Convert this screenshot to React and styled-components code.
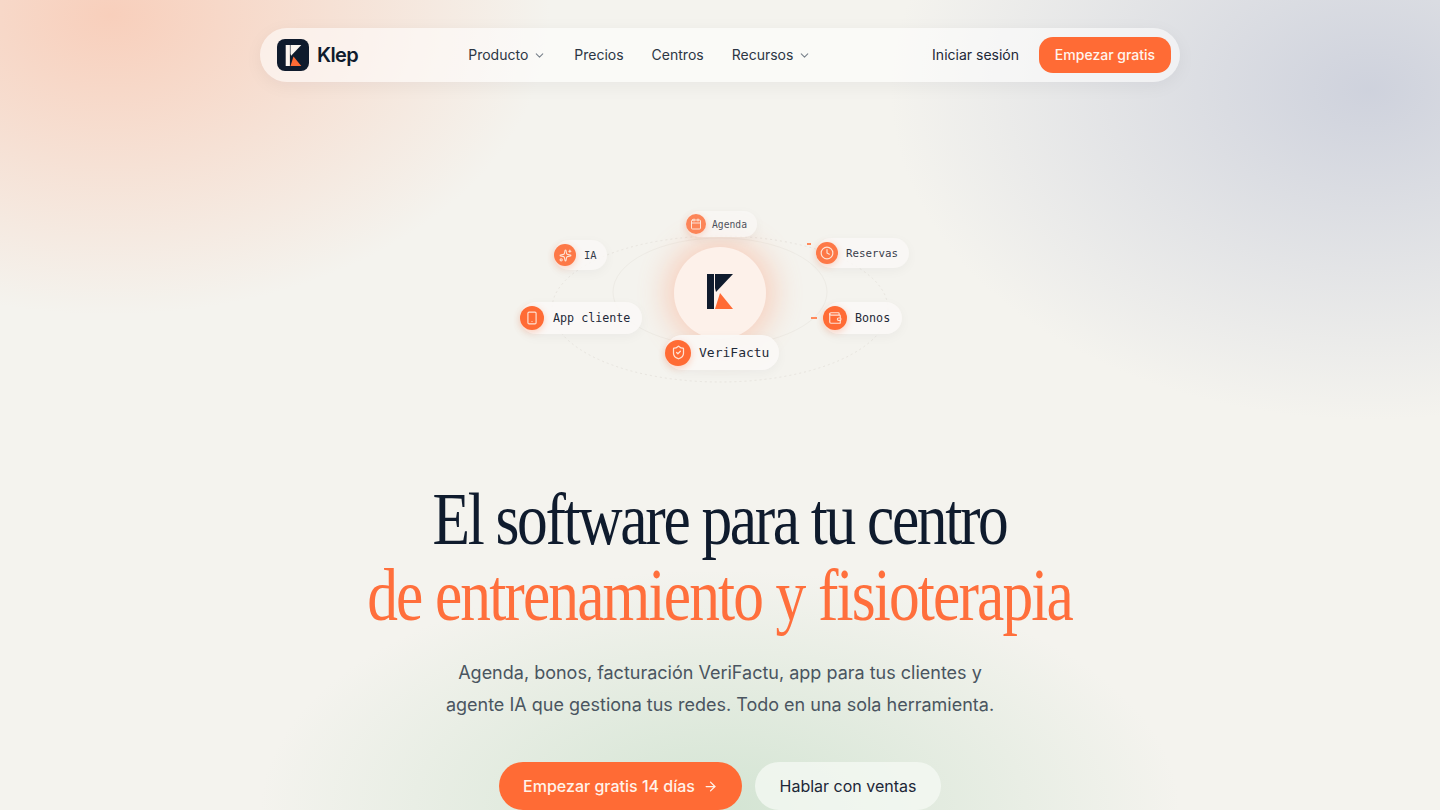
import React from "react";
import styled, { createGlobalStyle } from "styled-components";
import {
  ArrowRight,
  Calendar,
  ChevronDown,
  Clock,
  ShieldCheck,
  Smartphone,
  Sparkles,
  Wallet,
} from "lucide-react";

const GlobalStyle = createGlobalStyle`
  html, body {
    margin: 0;
    height: 100%;
    overflow: hidden;
    background: #f4f3ee;
    font-family: "Inter", "Liberation Sans", sans-serif;
    color: #0f1b2d;
  }
`;

const Page = styled.div`
  width: 1440px;
  height: 810px;
  overflow: hidden;
  display: flex;
  flex-direction: column;
  align-items: center;
  background:
    radial-gradient(ellipse 440px 300px at 110px 15px, rgba(249, 198, 175, 0.8), rgba(249, 198, 175, 0) 100%),
    radial-gradient(ellipse 480px 330px at 1370px 90px, rgba(194, 199, 215, 0.75), rgba(194, 199, 215, 0) 100%),
    radial-gradient(ellipse 460px 240px at 720px 810px, rgba(204, 225, 205, 0.82), rgba(204, 225, 205, 0) 100%),
    #f4f3ee;
`;

const Nav = styled.nav`
  box-sizing: border-box;
  width: 920px;
  height: 54px;
  margin-top: 28px;
  padding: 0 9px 0 17px;
  display: flex;
  align-items: center;
  border-radius: 27px;
  background: rgba(255, 255, 255, 0.55);
  box-shadow: 0 4px 18px rgba(15, 27, 45, 0.05);
`;

const Brand = styled.div`
  display: flex;
  align-items: center;
  gap: 8px;
  font-size: 20px;
  font-weight: 600;
  letter-spacing: -0.03em;
`;

const LogoTile = styled.div`
  width: 32px;
  height: 32px;
  border-radius: 8px;
  background: #0f1b2d;
  display: flex;
  align-items: center;
  justify-content: center;
`;

const NavLinks = styled.div`
  display: flex;
  align-items: center;
  gap: 28px;
  margin-left: 110px;
`;

const NavLink = styled.a`
  display: flex;
  align-items: center;
  gap: 5px;
  font-size: 14px;
  line-height: 20px;
  color: #2c3644;

  svg {
    color: #7a828c;
  }
`;

const NavActions = styled.div`
  margin-left: auto;
  display: flex;
  align-items: center;
  gap: 20px;
`;

const Login = styled.a`
  font-size: 14px;
  line-height: 20px;
  padding-bottom: 1px;
  color: #1c2737;
`;

const NavCta = styled.a`
  box-sizing: border-box;
  width: 132px;
  height: 36px;
  padding-bottom: 1px;
  border-radius: 14px;
  background: #ff6b35;
  color: #fff5ee;
  font-size: 14px;
  font-weight: 500;
  display: flex;
  align-items: center;
  justify-content: center;
`;

const Diagram = styled.div`
  position: relative;
  width: 420px;
  height: 185px;
  margin-top: 123px;
  flex: none;
`;

const Orbits = styled.svg`
  position: absolute;
  inset: 0;
  width: 100%;
  height: 100%;
  overflow: visible;
`;

const Core = styled.div`
  position: absolute;
  left: 164px;
  top: 42px;
  width: 92px;
  height: 92px;
  box-sizing: border-box;
  padding-bottom: 3px;
  border-radius: 50%;
  background: #fdf1ea;
  box-shadow: 0 0 28px 9px rgba(255, 140, 95, 0.32);
  display: flex;
  align-items: center;
  justify-content: center;
`;

const Node = styled.div`
  position: absolute;
  left: ${(p) => p.$x}px;
  top: ${(p) => p.$y}px;
  height: ${(p) => p.$h}px;
  box-sizing: border-box;
  padding-right: ${(p) => p.$pad}px;
  display: flex;
  align-items: center;
  gap: ${(p) => p.$gap}px;
  border-radius: ${(p) => p.$h / 2}px;
  background: rgba(250, 248, 245, 0.95);
  box-shadow: 0 3px 12px rgba(15, 27, 45, 0.04);
  opacity: ${(p) => p.$fade};
`;

const NodeIcon = styled.span`
  width: ${(p) => p.$size}px;
  height: ${(p) => p.$size}px;
  flex: none;
  border-radius: 50%;
  background: #ff6b35;
  color: rgba(255, 240, 230, 0.9);
  box-shadow: 0 2px 7px rgba(255, 107, 53, 0.3);
  display: flex;
  align-items: center;
  justify-content: center;
`;

const NodeLabel = styled.span`
  font-family: "DejaVu Sans Mono", "Liberation Mono", monospace;
  font-size: ${(p) => p.$size}px;
  color: #1f2a38;
  white-space: nowrap;
`;

// the reference face is a condensed serif, Liberation Serif gets squeezed to its width
const Title = styled.h1`
  margin: 91px 0 0;
  font-family: "Liberation Serif", serif;
  font-weight: 400;
  font-size: 74px;
  line-height: 76px;
  letter-spacing: -2.8px;
  text-align: center;
  white-space: nowrap;
  color: #0f1b2d;
  transform: scaleX(0.83);
`;

const Accent = styled.span`
  display: block;
  letter-spacing: -2.24px;
  color: #ff6f3c;
`;

const Lead = styled.p`
  margin: 24px 0 0;
  font-size: 18px;
  line-height: 32px;
  text-align: center;
  color: #4a5560;
`;

const Actions = styled.div`
  display: flex;
  gap: 13px;
  margin-top: 41px;
`;

const Button = styled.a`
  height: 48px;
  flex: none;
  box-sizing: border-box;
  border-radius: 24px;
  display: flex;
  align-items: center;
  justify-content: center;
  gap: 8px;
  font-size: 16px;
  font-weight: ${(p) => (p.$primary ? 500 : 400)};
  width: ${(p) => p.$width}px;
  background: ${(p) => (p.$primary ? "#ff6b35" : "rgba(246, 249, 244, 0.75)")};
  color: ${(p) => (p.$primary ? "#fff3ea" : "#1c2737")};
`;

const KMark = ({ width, height, body, arm }) => (
  <svg width={width} height={height} viewBox="0 0 26 35">
    <rect x="0" y="0" width="7" height="35" fill={body} />
    <polygon points="8,0 26,0 9,18 8,14" fill={arm} />
    <polygon points="13,19 26,35 8,35" fill="#ff6b35" />
  </svg>
);

const nodes = [
  { label: "Agenda", Icon: Calendar, x: 176, y: 6, h: 26, icon: 20, glyph: 12, text: 9.7, gap: 6, pad: 10, fade: 0.8 },
  { label: "IA", Icon: Sparkles, x: 44, y: 35, h: 30, icon: 22, glyph: 13, text: 10.5, gap: 8, pad: 10, fade: 0.9 },
  { label: "Reservas", Icon: Clock, x: 306, y: 33, h: 30, icon: 22, glyph: 14, text: 10.8, gap: 8, pad: 11, fade: 0.9 },
  { label: "App cliente", Icon: Smartphone, x: 10, y: 97, h: 32, icon: 24, glyph: 14, text: 11.7, gap: 9, pad: 12, fade: 1 },
  { label: "Bonos", Icon: Wallet, x: 313, y: 97, h: 32, icon: 24, glyph: 14, text: 11.7, gap: 8, pad: 12, fade: 1 },
  { label: "VeriFactu", Icon: ShieldCheck, x: 155, y: 130, h: 35, icon: 26, glyph: 15, text: 13, gap: 8, pad: 10, fade: 1 },
];

export default function App() {
  return (
    <Page>
      <GlobalStyle />
      <Nav>
        <Brand>
          <LogoTile>
            <KMark width={17} height={21} body="#fdf6f0" arm="#fdf6f0" />
          </LogoTile>
          Klep
        </Brand>
        <NavLinks>
          <NavLink>
            Producto <ChevronDown size={13} />
          </NavLink>
          <NavLink>Precios</NavLink>
          <NavLink>Centros</NavLink>
          <NavLink>
            Recursos <ChevronDown size={13} />
          </NavLink>
        </NavLinks>
        <NavActions>
          <Login>Iniciar sesión</Login>
          <NavCta>Empezar gratis</NavCta>
        </NavActions>
      </Nav>

      <Diagram>
        <Orbits viewBox="0 0 420 185" fill="none">
          <ellipse cx="210" cy="104" rx="168" ry="73" stroke="#e8e5df" strokeDasharray="2 3" />
          <ellipse cx="210" cy="87" rx="107" ry="54" stroke="#edebe5" />
          <line x1="297" y1="39" x2="301" y2="39" stroke="#ff8a5c" strokeWidth="2" />
          <line x1="301" y1="113" x2="307" y2="113" stroke="#ff8a5c" strokeWidth="2" />
        </Orbits>
        <Core>
          <KMark width={26} height={35} body="#0f1b2d" arm="#0f1b2d" />
        </Core>
        {nodes.map(({ label, Icon, x, y, h, icon, glyph, text, gap, pad, fade }) => (
          <Node key={label} $x={x} $y={y} $h={h} $gap={gap} $pad={pad} $fade={fade}>
            <NodeIcon $size={icon}>
              <Icon size={glyph} strokeWidth={2} />
            </NodeIcon>
            <NodeLabel $size={text}>{label}</NodeLabel>
          </Node>
        ))}
      </Diagram>

      <Title>
        El software para tu centro
        <Accent>de entrenamiento y fisioterapia</Accent>
      </Title>
      <Lead>
        Agenda, bonos, facturación VeriFactu, app para tus clientes y
        <br />
        agente IA que gestiona tus redes. Todo en una sola herramienta.
      </Lead>
      <Actions>
        <Button $primary $width={243}>
          Empezar gratis 14 días <ArrowRight size={15} />
        </Button>
        <Button $width={186}>Hablar con ventas</Button>
      </Actions>
    </Page>
  );
}
